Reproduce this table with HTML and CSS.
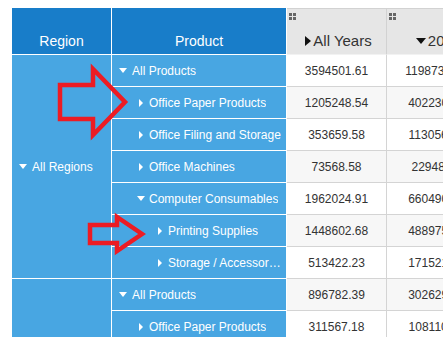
FILE: index.html
```html
<!DOCTYPE html>
<html>
<head>
<meta charset="utf-8">
<link rel="stylesheet" href="styles.css">
</head>
<body>
<div class="pivot">
  <div class="hd hd-blue">Region</div>
  <div class="hd hd-blue hd-prod">Product</div>
  <div class="hd hd-gray">
    <svg class="grip" width="8" height="7" viewBox="0 0 8 7"><rect x="0" y="0" width="3" height="3"/><rect x="4" y="0" width="3" height="3"/><rect x="0" y="4" width="3" height="3"/><rect x="4" y="4" width="3" height="3"/></svg>
    <span class="hlabel"><svg class="htri" width="6" height="10" viewBox="0 0 6 10"><path d="M0 0L6 5L0 10z"/></svg>All Years</span>
  </div>
  <div class="hd hd-gray">
    <svg class="grip" width="8" height="7" viewBox="0 0 8 7"><rect x="0" y="0" width="3" height="3"/><rect x="4" y="0" width="3" height="3"/><rect x="0" y="4" width="3" height="3"/><rect x="4" y="4" width="3" height="3"/></svg>
    <span class="hlabel"><svg class="htri" width="10" height="6" viewBox="0 0 10 6"><path d="M0 0H10L5 6z"/></svg>2012</span>
  </div>

  <div class="region span7"><span class="slot"><svg width="8" height="5" viewBox="0 0 8 5"><path d="M0 0H8L4 5z"/></svg></span><span>All Regions</span></div>

  <div class="prod lv0"><span class="slot"><svg width="8" height="5" viewBox="0 0 8 5"><path d="M0 0H8L4 5z"/></svg></span><span class="pl">All Products</span></div>
  <div class="num">3594501.61</div><div class="num">1198733.27</div>

  <div class="prod lv1"><span class="slot"><svg width="4" height="8" viewBox="0 0 4 8"><path d="M0 0L4 4L0 8z"/></svg></span><span class="pl">Office Paper Products</span></div>
  <div class="num alt">1205248.54</div><div class="num alt">402230.18</div>

  <div class="prod lv1"><span class="slot"><svg width="4" height="8" viewBox="0 0 4 8"><path d="M0 0L4 4L0 8z"/></svg></span><span class="pl">Office Filing and Storage</span></div>
  <div class="num">353659.58</div><div class="num">113056.42</div>

  <div class="prod lv1"><span class="slot"><svg width="4" height="8" viewBox="0 0 4 8"><path d="M0 0L4 4L0 8z"/></svg></span><span class="pl">Office Machines</span></div>
  <div class="num alt">73568.58</div><div class="num alt">22948.35</div>

  <div class="prod lv1"><span class="slot"><svg width="8" height="5" viewBox="0 0 8 5"><path d="M0 0H8L4 5z"/></svg></span><span class="pl">Computer Consumables</span></div>
  <div class="num">1962024.91</div><div class="num">660490.32</div>

  <div class="prod lv2"><span class="slot"><svg width="4" height="8" viewBox="0 0 4 8"><path d="M0 0L4 4L0 8z"/></svg></span><span class="pl">Printing Supplies</span></div>
  <div class="num alt">1448602.68</div><div class="num alt">488975.61</div>

  <div class="prod lv2"><span class="slot"><svg width="4" height="8" viewBox="0 0 4 8"><path d="M0 0L4 4L0 8z"/></svg></span><span class="pl">Storage / Accessories</span></div>
  <div class="num">513422.23</div><div class="num">171521.71</div>

  <div class="region span7"><span class="slot"><svg width="4" height="8" viewBox="0 0 4 8"><path d="M0 0L4 4L0 8z"/></svg></span><span>Central</span></div>

  <div class="prod lv0"><span class="slot"><svg width="8" height="5" viewBox="0 0 8 5"><path d="M0 0H8L4 5z"/></svg></span><span class="pl">All Products</span></div>
  <div class="num alt">896782.39</div><div class="num alt">302629.54</div>

  <div class="prod lv1"><span class="slot"><svg width="4" height="8" viewBox="0 0 4 8"><path d="M0 0L4 4L0 8z"/></svg></span><span class="pl">Office Paper Products</span></div>
  <div class="num">311567.18</div><div class="num">108110.27</div>

  <div class="prod lv1"><span class="slot"><svg width="4" height="8" viewBox="0 0 4 8"><path d="M0 0L4 4L0 8z"/></svg></span><span class="pl">Office Filing and Storage</span></div>
  <div class="num alt">88912.40</div><div class="num alt">28471.09</div>

  <div class="prod lv1"><span class="slot"><svg width="4" height="8" viewBox="0 0 4 8"><path d="M0 0L4 4L0 8z"/></svg></span><span class="pl">Office Machines</span></div>
  <div class="num">18392.15</div><div class="num">5737.12</div>

  <div class="prod lv1"><span class="slot"><svg width="4" height="8" viewBox="0 0 4 8"><path d="M0 0L4 4L0 8z"/></svg></span><span class="pl">Computer Consumables</span></div>
  <div class="num alt">477910.66</div><div class="num alt">160311.06</div>

  <div class="prod lv1"><span class="slot"><svg width="4" height="8" viewBox="0 0 4 8"><path d="M0 0L4 4L0 8z"/></svg></span><span class="pl">Printing Supplies</span></div>
  <div class="num">362150.67</div><div class="num">122244.90</div>

  <div class="prod lv1"><span class="slot"><svg width="4" height="8" viewBox="0 0 4 8"><path d="M0 0L4 4L0 8z"/></svg></span><span class="pl">Storage / Accessories</span></div>
  <div class="num alt">115759.99</div><div class="num alt">38066.16</div>
</div>

<svg class="marks" width="443" height="337" viewBox="0 0 443 337">
  <polygon points="60,85 93,85 93,69 125,102 93,135 93,119 60,119"/>
  <polygon points="90,225 117,225 117,217 142,234 117,251 117,243 90,243"/>
</svg>
</body>
</html>
```

FILE: styles.css
```css
html, body {
  margin: 0;
  overflow: hidden;
  background: #ffffff;
}
body {
  padding: 8px 0 0 12px;
  font-family: "Liberation Sans", Arial, sans-serif;
  font-size: 12px;
  width: 443px;
  height: 337px;
  box-sizing: border-box;
}
.pivot {
  display: grid;
  grid-template-columns: 100px 175px 100px 100px;
  grid-template-rows: 47px;
  grid-auto-rows: 32px;
  width: 475px;
}
.pivot > div {
  box-sizing: border-box;
  min-width: 0;
}
.hd {
  display: flex;
  flex-direction: column;
  border-bottom: 1px solid #ffffff;
  border-right: 1px solid #ffffff;
}
.hd-blue {
  background: #187dc9;
  color: #ffffff;
  font-size: 14px;
  line-height: 18px;
  align-items: center;
  padding-top: 24px;
}
.hd-gray {
  background: #e6e6e6;
  color: #333333;
  border-top: 1px solid #d2d2d2;
  border-right: 1px solid #d2d2d2;
  border-bottom: 1px solid #f2f2f2;
  padding: 4px 0 0 2px;
  font-size: 15px;
  line-height: 18px;
}
.grip {
  fill: #666666;
  display: block;
}
.hlabel {
  display: flex;
  align-items: center;
  justify-content: center;
  margin-top: 12px;
  padding-left: 2px;
}
.htri {
  fill: #111111;
  margin-right: 2px;
  flex: none;
}
.slot {
  width: 8px;
  flex: none;
  display: flex;
  align-items: center;
  justify-content: center;
  margin-right: 4px;
}
.slot svg {
  fill: #ffffff;
  display: block;
}
.region {
  grid-row: span 7;
  background: #48a6e2;
  color: #ffffff;
  border-right: 1px solid #ffffff;
  border-bottom: 1px solid #ffffff;
  display: flex;
  align-items: center;
  padding-left: 7px;
  white-space: nowrap;
}
.region .slot {
  margin-right: 5px;
}
.prod {
  background: #48a6e2;
  color: #ffffff;
  border-right: 1px solid #ffffff;
  border-bottom: 1px solid #ffffff;
  display: flex;
  align-items: center;
  white-space: nowrap;
  overflow: hidden;
  padding-right: 5px;
}
.pl {
  overflow: hidden;
  text-overflow: ellipsis;
  min-width: 0;
}
.lv0 { padding-left: 7px; }
.lv0 .slot { margin-right: 5px; }
.lv1 { padding-left: 25px; }
.lv2 { padding-left: 44px; }
.num {
  background: #ffffff;
  color: #333333;
  border-right: 1px solid #d4d4d4;
  border-bottom: 1px solid #d4d4d4;
  display: flex;
  align-items: center;
  justify-content: center;
  white-space: nowrap;
}
.num.alt {
  background: #f7f7f7;
}
.marks {
  position: absolute;
  left: 0;
  top: 0;
  pointer-events: none;
}
.marks polygon {
  fill: none;
  stroke: #ec1c24;
  stroke-width: 4.5;
  stroke-linejoin: miter;
}
```
